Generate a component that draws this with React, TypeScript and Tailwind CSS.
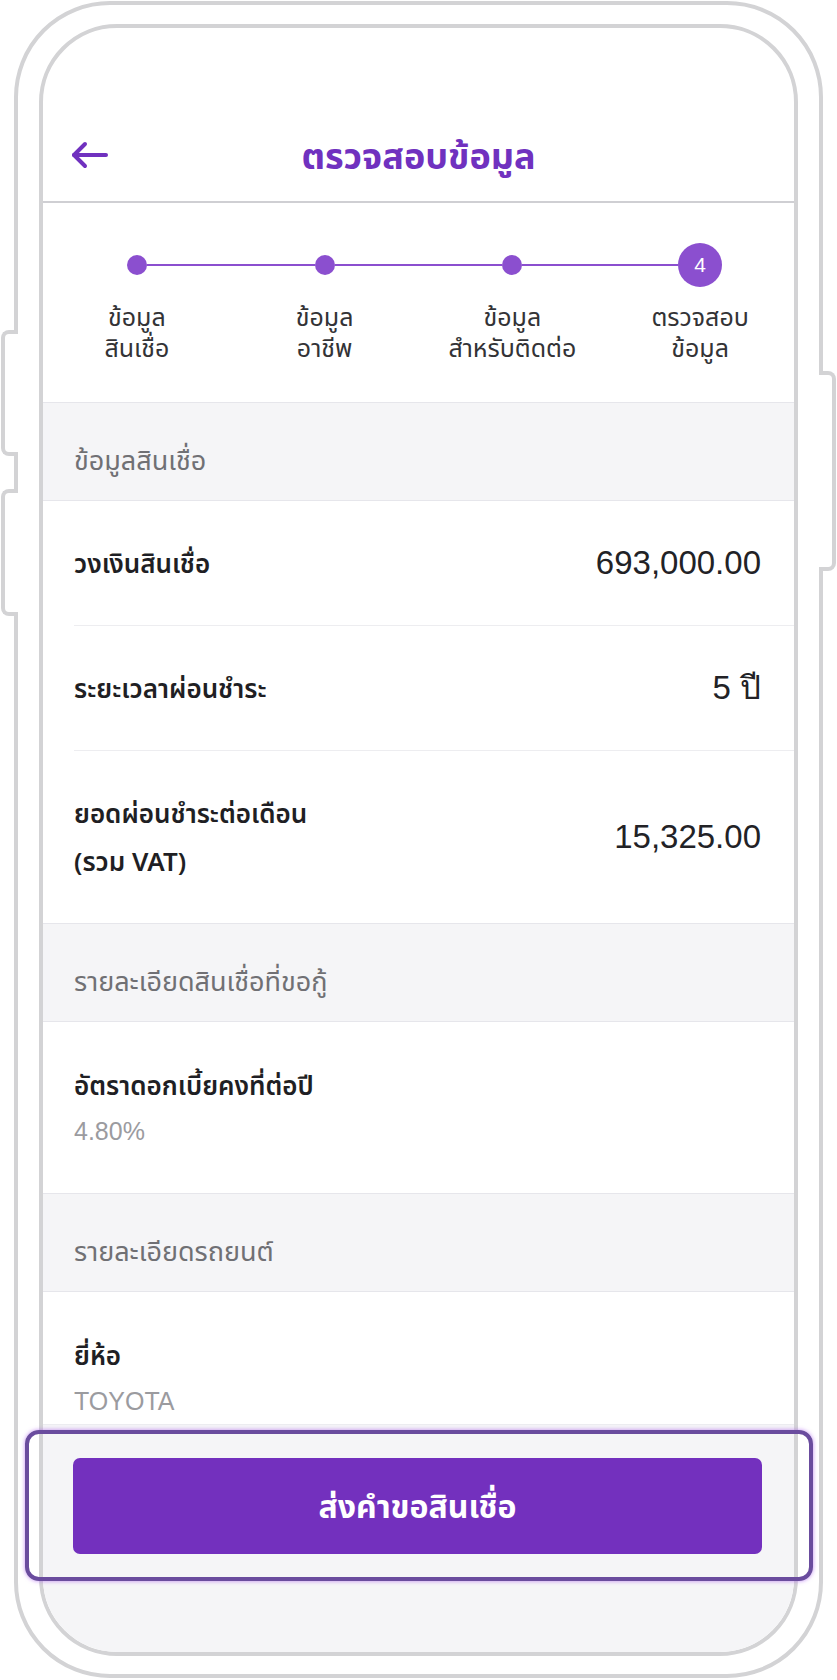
import React from 'react';

const STEPS = [
  ['ข้อมูล', 'สินเชื่อ'],
  ['ข้อมูล', 'อาชีพ'],
  ['ข้อมูล', 'สำหรับติดต่อ'],
  ['ตรวจสอบ', 'ข้อมูล'],
];

const SectionHeader = ({ title }: { title: string }) => (
  <div className="h-[99px] shrink-0 bg-[#f5f5f7] border-y border-[#e6e6eb] flex items-center pt-[18px] pl-[31px] text-[27px] text-[#707074]">
    {title}
  </div>
);

const Row = ({ label, value, height }: { label: React.ReactNode; value: string; height: string }) => (
  <div className="pl-[31px] bg-white">
    <div className={`${height} flex items-center justify-between pr-[33px] border-b border-[#ededf0]`}>
      <div className="text-[26px] leading-[48px] font-semibold text-[#1f1f24]">{label}</div>
      <div className="text-[33px] font-['Liberation_Sans',sans-serif] text-[#222226]">{value}</div>
    </div>
  </div>
);

const StackRow = ({ label, value }: { label: string; value: string }) => (
  <div className="h-[171px] shrink-0 bg-white flex flex-col justify-center pl-[31px]">
    <div className="text-[26px] leading-[46px] font-semibold text-[#1f1f24]">{label}</div>
    <div className="text-[25px] leading-[46px] text-[#9b9b9f] font-['Liberation_Sans',sans-serif]">{value}</div>
  </div>
);

export default function App() {
  return (
    <div className="relative w-[837px] h-[1680px] bg-white overflow-hidden pl-[14px] pt-[1px] font-['Noto_Sans','Noto_Sans_Thai','Liberation_Sans',sans-serif]">
      {/* side buttons */}
      <div className="absolute left-[1px] top-[330px] w-[17px] h-[126px] bg-white border-4 border-r-0 border-[#d3d3d5] rounded-l-[8px]" />
      <div className="absolute left-[1px] top-[489px] w-[17px] h-[127px] bg-white border-4 border-r-0 border-[#d3d3d5] rounded-l-[8px]" />
      <div className="absolute left-[819px] top-[371px] w-[17px] h-[200px] bg-white border-4 border-l-0 border-[#d3d3d5] rounded-r-[8px]" />

      {/* phone shell */}
      <div className="w-[809px] h-[1677px] rounded-[96px] border-4 border-[#d3d3d5] pl-[21px] pt-[19px]">
        <div className="w-[759px] h-[1632px] rounded-[78px] border-4 border-[#d3d3d5] overflow-hidden flex flex-col bg-white">
          {/* header */}
          <header className="h-[175px] shrink-0 border-b-2 border-[#cfcfd3] grid grid-cols-[100px_1fr_100px] items-end pb-[19px]">
            <div className="h-[52px] flex items-center pl-[28px] pb-[2px]">
              <svg width="38" height="30" viewBox="0 0 38 30" fill="none" stroke="#7031bf" strokeWidth="4" strokeLinecap="round" strokeLinejoin="round">
                <path d="M3 15H35" />
                <path d="M14 4L3 15L14 26" />
              </svg>
            </div>
            <h1 className="text-center text-[36px] leading-[52px] font-bold text-[#7031bf]">ตรวจสอบข้อมูล</h1>
            <div />
          </header>

          {/* scrolling content */}
          <div className="flex-1 overflow-hidden flex flex-col">
            <div className="h-[199px] shrink-0 pt-[40px] grid grid-cols-4">
              {STEPS.map((s, i) => (
                <div key={i} className="flex flex-col items-center">
                  <div className="w-full h-[44px] flex items-center">
                    <div className={i === 0 ? 'flex-1 h-[2px]' : 'flex-1 h-[2px] bg-[#8b4fcf]'} />
                    {i === 3 ? (
                      <div className="w-[44px] h-[44px] rounded-full bg-[#8b4fcf] text-white text-[21px] flex items-center justify-center font-['Liberation_Sans',sans-serif]">
                        4
                      </div>
                    ) : (
                      <div className="w-[20px] h-[20px] rounded-full bg-[#8b4fcf]" />
                    )}
                    <div className={i === 3 ? 'flex-1 h-[2px]' : 'flex-1 h-[2px] bg-[#8b4fcf]'} />
                  </div>
                  <div className="mt-[14px] text-center text-[25px] leading-[31px] text-[#333336]">
                    {s[0]}
                    <br />
                    {s[1]}
                  </div>
                </div>
              ))}
            </div>

            <SectionHeader title="ข้อมูลสินเชื่อ" />
            <Row label="วงเงินสินเชื่อ" value="693,000.00" height="h-[125px]" />
            <Row label="ระยะเวลาผ่อนชำระ" value="5 ปี" height="h-[125px]" />
            <div className="h-[172px] shrink-0 bg-white flex items-center justify-between pl-[31px] pr-[33px]">
              <div className="text-[26px] leading-[48px] font-semibold text-[#1f1f24]">
                ยอดผ่อนชำระต่อเดือน
                <br />
                (รวม VAT)
              </div>
              <div className="text-[33px] font-['Liberation_Sans',sans-serif] text-[#222226]">15,325.00</div>
            </div>

            <SectionHeader title="รายละเอียดสินเชื่อที่ขอกู้" />
            <StackRow label="อัตราดอกเบี้ยคงที่ต่อปี" value="4.80%" />

            <SectionHeader title="รายละเอียดรถยนต์" />
            <StackRow label="ยี่ห้อ" value="TOYOTA" />
          </div>

          {/* footer */}
          <div className="h-[228px] shrink-0 bg-[#f5f5f7] border-t border-[#ececf0] pt-[33px] pl-[30px] pr-[32px]">
            <button className="w-full h-[96px] rounded-[7px] bg-[#7330be] text-white text-[32px] font-bold">
              ส่งคำขอสินเชื่อ
            </button>
          </div>
        </div>
      </div>

      {/* highlight outline */}
      <div className="absolute left-[25px] top-[1430px] w-[788px] h-[151px] rounded-[14px] border-4 border-[#6a4c9e] shadow-[0_0_4px_rgba(170,90,240,0.7)] pointer-events-none" />
    </div>
  );
}
